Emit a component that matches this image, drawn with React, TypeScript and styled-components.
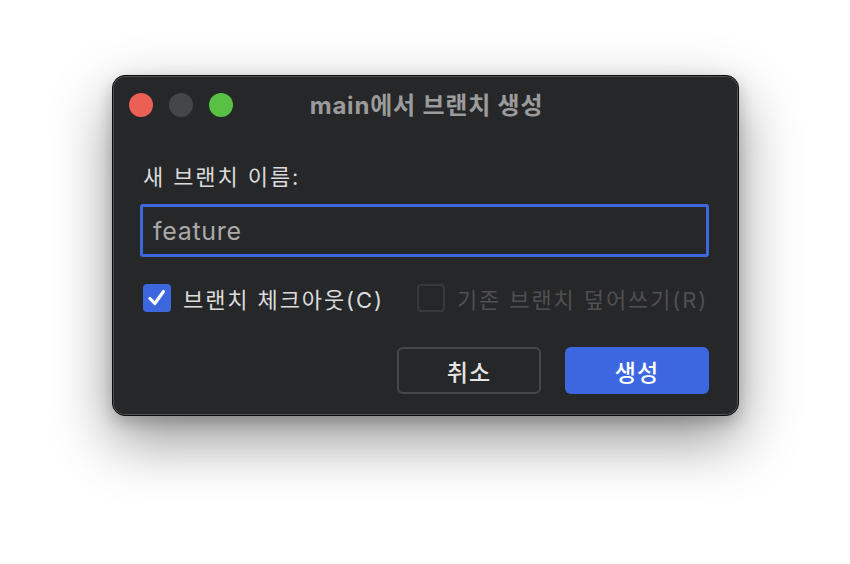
import React from "react";
import styled, { createGlobalStyle } from "styled-components";

const Global = createGlobalStyle`
  html, body { margin: 0; padding: 0; background: #ffffff; }
  body { font-family: Inter, "Noto Sans CJK KR", sans-serif; }
`;

const Page = styled.div`
  width: 850px;
  height: 564px;
  display: flex;
  justify-content: center;
  align-items: flex-start;
  padding-top: 75px;
  box-sizing: border-box;
  overflow: hidden;
`;

const Window = styled.div`
  width: 627px;
  height: 341px;
  box-sizing: border-box;
  background: #262729;
  border: 1px solid #0c0c0d;
  border-radius: 13px;
  box-shadow: inset 0 0 0 1px rgba(255, 255, 255, 0.2), 0 24px 60px rgba(0, 0, 0, 0.42),
    0 6px 16px rgba(0, 0, 0, 0.2);
  display: flex;
  flex-direction: column;
  margin-left: 1px;
`;

const TitleBar = styled.div`
  height: 57px;
  display: flex;
  align-items: center;
  padding: 0 16px;
  position: relative;
`;

const Lights = styled.div`
  display: flex;
  gap: 16px;
`;

const Light = styled.span<{ $c: string }>`
  width: 24px;
  height: 24px;
  border-radius: 50%;
  background: ${(p) => p.$c};
`;

const Title = styled.div`
  position: absolute;
  left: 0;
  right: 0;
  top: 0;
  height: 55px;
  display: flex;
  align-items: center;
  justify-content: center;
  font-size: 24px;
  font-weight: 700;
  letter-spacing: 0.8px;
  color: #9b9b9b;
  pointer-events: none;
  padding-left: 2px;
`;

const Body = styled.div`
  flex: 1;
  display: flex;
  flex-direction: column;
  padding: 30px 29px 21px 27px;
`;

const Label = styled.div`
  font-size: 22px;
  color: #dadada;
  line-height: 28px;
  padding-left: 3px;
  letter-spacing: 1.9px;
`;

const Input = styled.div`
  margin-top: 13px;
  height: 53px;
  box-sizing: border-box;
  border: 3.5px solid #3e68e0;
  border-radius: 3px;
  display: flex;
  align-items: center;
  padding-left: 10px;
  font-size: 25px;
  color: #a9a9a9;
  letter-spacing: 0.7px;
`;

const OptionRow = styled.div`
  margin-top: 25px;
  display: flex;
  align-items: center;
  padding-left: 3px;
  gap: 33px;
`;

const Option = styled.div<{ $disabled?: boolean }>`
  display: flex;
  align-items: center;
  gap: 12px;
  font-size: 22px;
  color: ${(p) => (p.$disabled ? "#4f5052" : "#dcdcdc")};
  letter-spacing: 1.9px;
`;

const Box = styled.span<{ $checked?: boolean }>`
  width: 28px;
  height: 28px;
  flex: none;
  box-sizing: border-box;
  border-radius: 4px;
  background: ${(p) => (p.$checked ? "#3d67df" : "transparent")};
  border: ${(p) => (p.$checked ? "none" : "2px solid #38393b")};
  display: flex;
  align-items: center;
  justify-content: center;
`;

const Buttons = styled.div`
  margin-top: auto;
  display: flex;
  justify-content: flex-end;
  gap: 24px;
`;

const Button = styled.div<{ $primary?: boolean }>`
  width: 144px;
  height: 47px;
  box-sizing: border-box;
  border-radius: 6px;
  display: flex;
  align-items: center;
  justify-content: center;
  font-size: 23px;
  font-weight: 500;
  letter-spacing: 1px;
  color: ${(p) => (p.$primary ? "#ffffff" : "#e4e4e4")};
  background: ${(p) => (p.$primary ? "#3d67e0" : "transparent")};
  border: ${(p) => (p.$primary ? "none" : "2px solid #46474a")};
`;

export default function App() {
  return (
    <>
      <Global />
      <Page>
        <Window>
          <TitleBar>
            <Lights>
              <Light $c="#ec5f55" />
              <Light $c="#454648" />
              <Light $c="#58c143" />
            </Lights>
            <Title>main에서 브랜치 생성</Title>
          </TitleBar>
          <Body>
            <Label>새 브랜치 이름:</Label>
            <Input>feature</Input>
            <OptionRow>
              <Option>
                <Box $checked>
                  <svg width="22" height="22" viewBox="0 0 22 22">
                    <path
                      d="M4 11.5 L8.8 16.5 L17.5 4.5"
                      fill="none"
                      stroke="#ffffff"
                      strokeWidth="3.2"
                      strokeLinecap="round"
                      strokeLinejoin="round"
                    />
                  </svg>
                </Box>
                브랜치 체크아웃(C)
              </Option>
              <Option $disabled>
                <Box />
                기존 브랜치 덮어쓰기(R)
              </Option>
            </OptionRow>
            <Buttons>
              <Button>취소</Button>
              <Button $primary>생성</Button>
            </Buttons>
          </Body>
        </Window>
      </Page>
    </>
  );
}
